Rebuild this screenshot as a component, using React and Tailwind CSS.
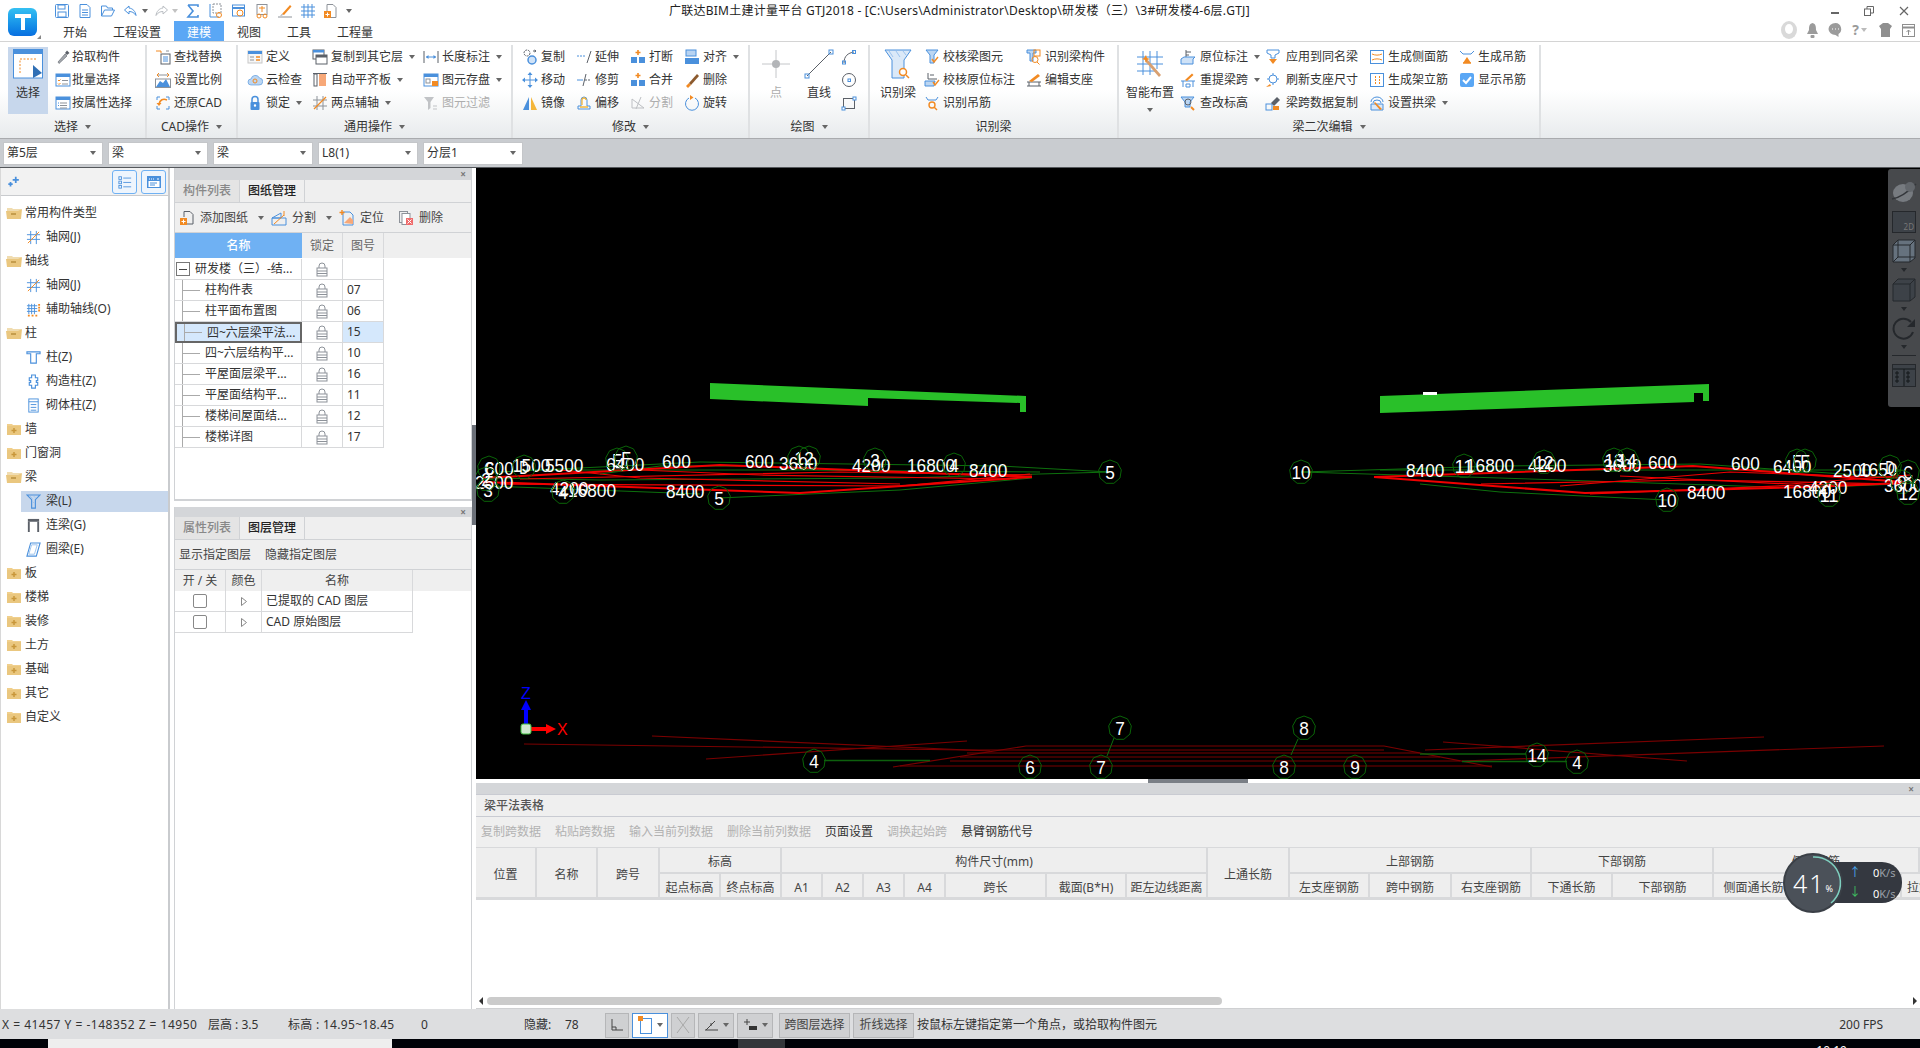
import React from 'react';

const B = '#4a90dc';
const O = '#f28a22';
const G = '#8d9299';
const D = '#5b6068';

const ICONS = {
  save: <><rect x="1.5" y="1.5" width="13" height="13" rx="1" stroke={B} /><rect x="4" y="2" width="7" height="4" stroke={B} /><rect x="4" y="9" width="8" height="5" stroke={B} /></>,
  page: <><path d="M3 1.5h7l3 3v10H3z" stroke={B} /><path d="M5 7h6M5 9.5h6M5 12h6" stroke={B} /></>,
  open: <><path d="M1.5 13V3h5l1 2h5v2" stroke={B} /><path d="M1.5 13l3-6h10l-3 6z" stroke={B} /></>,
  undo: <path d="M6 3L1.5 7 6 11V8.500c3 0 5 1 7 4-.5-4-3-7-7-7.500z" stroke={B} />,
  redo: <path d="M10 3l4.500 4-4.500 4V8.500c-3 0-5 1-7 4 .5-4 3-7 7-7.500z" stroke="#b9bdc2" />,
  sigma: <path d="M3 2h10v2M3 2l5 6-5 6h10v-2" stroke={B} strokeWidth="1.6" />,
  qa1: <><path d="M2 1v13h9" stroke={B} /><rect x="5" y="1" width="8" height="9" stroke={G} strokeDasharray="2 1" /><circle cx="11" cy="12" r="2.500" stroke={O} /></>,
  qa2: <><rect x="1.500" y="2" width="12" height="11" stroke={B} /><path d="M2 5h11" stroke={B} strokeWidth="2" /><circle cx="9" cy="10" r="3" stroke={O} /></>,
  qa3: <><rect x="3" y="1.500" width="10" height="10" stroke={G} /><path d="M5 5h6M8 3v6" stroke={O} /><circle cx="5" cy="13" r="2" stroke={O} /><circle cx="11" cy="13" r="2" stroke={O} /></>,
  qa4: <><path d="M5 11L13 2l1.500 1.500L7 12z" fill={O} /><path d="M1 14h14" stroke={G} /><path d="M3 13l2-2 1 1z" fill={G} /></>,
  qa5: <path d="M4 1v14M8 1v14M12 1v14M1 4h14M1 8h14M1 12h14" stroke={B} />,
  qa6: <><path d="M4 1.500h6l3 3v10H4z" stroke={G} /><rect x="1" y="8" width="7" height="7" fill={O} /><path d="M4.500 9.500v4M2.500 11.500h4" stroke="#fff" /></>,

  pick: <><path d="M3 13l7-8 2 2-8 7.500z" fill="#a5a9ae" stroke={D} strokeWidth=".6" /><path d="M10 4l2-2.500 2.500 2.500L12 6z" fill={D} /></>,
  batch: <><rect x="1" y="2" width="14" height="12" fill="#fff" stroke={B} /><rect x="1" y="2" width="14" height="3" fill={B} /><path d="M3 8l1 1 1.500-1.500M3 11.500l1 1 1.500-1.500" stroke={O} /><path d="M7 8.500h6M7 12h6" stroke={G} /></>,
  attr: <><rect x="1" y="2" width="14" height="12" fill="#fff" stroke={B} /><rect x="1" y="2" width="14" height="3" fill={B} /><path d="M5 8h7M5 10.500h7M5 13h7" stroke={G} /><path d="M3 8h1M3 10.500h1" stroke={B} /></>,
  find: <><rect x="6" y="5" width="9" height="10" stroke={D} /><path d="M8 8h5M8 10h5M8 12h5" stroke={B} /><path d="M1 2h5M6 2v2" stroke={O} /><path d="M11 2h3" stroke={G} /></>,
  scale: <><path d="M1 15l4-6 3 2 3-4 4 8z" fill={B} /><path d="M2 3h12" stroke={G} /><path d="M2 3l2-2M2 3l2 2M14 3l-2-2M14 3l-2 2" stroke={O} /><rect x=".5" y="7" width="15" height="8.500" stroke={G} /></>,
  restore: <><path d="M2 5V2h3M11 2h3v3M14 11v3h-3M5 14H2v-3" stroke={B} /><path d="M12 5C8 3 5 5 4 9" stroke={O} strokeWidth="1.6" /><path d="M1.500 8l2.500 3 2.500-3z" fill={O} /></>,
  define: <><rect x="1" y="2" width="14" height="12" fill="#f6f6f6" stroke="#c7c7c7" /><rect x="1" y="2" width="14" height="3" fill={B} /><path d="M3 8h4M3 11h4" stroke={G} /><path d="M9 8h4M9 11h4" stroke={O} strokeWidth="1.400" /></>,
  cloud: <><path d="M4 13a3 3 0 010-6 4.500 4.500 0 018.500-1A3.500 3.500 0 0112 13z" fill="#bcd6f2" stroke={B} strokeWidth=".6" /><circle cx="8" cy="9" r="2" stroke={O} /></>,
  lock: <><path d="M5 8V4.500a3 3 0 016 0V8" stroke={B} strokeWidth="1.500" /><rect x="3.500" y="7" width="9" height="8" rx="1" fill={B} /><circle cx="8" cy="10.500" r="1.200" fill="#fff" /></>,
  copyFloor: <><rect x="1" y="1" width="11" height="9" fill="#fff" stroke={D} /><rect x="1" y="1" width="11" height="2.500" fill={B} /><rect x="4" y="6" width="11" height="9" fill="#fff" stroke={D} /><rect x="4" y="6" width="11" height="2.500" fill={D} /></>,
  alignPlate: <><rect x="2" y="2" width="3" height="12" stroke={D} /><rect x="7" y="2" width="7" height="12" fill="#f7a878" /><path d="M1 1.500h14" stroke={D} /></>,
  twoPt: <><path d="M5 1v14M11 1v14M1 5h14M1 11h14" stroke={G} /><path d="M2 14L14 2" stroke={O} strokeWidth="1.300" /></>,
  dim: <><path d="M1 2v12M15 2v12" stroke={D} /><path d="M3 8h10" stroke={B} /><path d="M3 8l2.500-2v4zM13 8l-2.500-2v4z" fill={B} /></>,
  store: <><rect x="1" y="2" width="14" height="12" fill="#fff" stroke={B} /><rect x="1" y="2" width="14" height="3" fill={B} /><rect x="3" y="7" width="4" height="4" stroke={G} /><rect x="9" y="9" width="6" height="5" fill={O} /></>,
  filter: <><path d="M1 2h10L7.500 7v6L5 15V7z" fill="#c1c3c6" /><path d="M10 11h4M10 14h4" stroke="#c1c3c6" /></>,
  copy: <><circle cx="5" cy="4" r="3" stroke={D} strokeDasharray="2 1" /><circle cx="10" cy="11" r="4" fill="#cfe2f7" stroke={B} strokeWidth="1.500" /><path d="M11 2h3l-1.500-1M14 2l-1.500 1" stroke={D} /></>,
  move: <><path d="M8 2v12M2 8h12" stroke={B} /><path d="M8 0l2.500 3h-5zM8 16l2.500-3h-5zM0 8l3-2.500v5zM16 8l-3-2.500v5z" fill={B} /></>,
  mirror: <><path d="M7 2v13H1z" fill={B} /><path d="M9 2v13h6z" fill="#f4b63a" /></>,
  extend: <><path d="M1 7h8" stroke={B} strokeDasharray="2 1" /><path d="M15 2L11 14" stroke={D} /></>,
  trim: <><path d="M1 8h6" stroke={B} /><path d="M9 8h6" stroke={D} strokeDasharray="2 1" /><path d="M10 2L7 14" stroke={D} /></>,
  offset: <><path d="M2 14v-3h3V5a3 3 0 016 0v6h3v3z" stroke={B} /><path d="M4 12h8M6 10V5a2 2 0 014 0" stroke="#f4b63a" strokeWidth="1.300" /></>,
  breakI: <><rect x="1" y="8" width="6" height="6" fill={B} /><rect x="9" y="8" width="6" height="6" fill={B} /><path d="M8 1v5M5.500 3.500h5" stroke={O} strokeWidth="1.600" /></>,
  split: <><path d="M2 13h12L2 4z" stroke="#bdbfc3" /><path d="M6 14L11 2" stroke="#bdbfc3" /></>,
  alignB: <><rect x="2" y="1" width="10" height="6" fill="#b7d3f2" stroke={B} /><rect x="1" y="9" width="14" height="6" fill={B} /></>,
  del: <><path d="M2 14l3-3 2 2-3 3z" fill={O} /><path d="M5 11l8-9 2 2-8 9z" fill="#8c5a2e" /></>,
  rotate: <><path d="M5 3a6.500 6.500 0 106 0" stroke={B} /><path d="M6 0v5l3.500-2.500z" fill={O} /></>,
  arc: <><path d="M3 14c0-7 4-10 10-11" stroke={D} /><rect x="1.500" y="12" width="3" height="3" stroke={B} /><rect x="11.500" y="1.500" width="3" height="3" stroke={B} /></>,
  circ: <><circle cx="8" cy="8" r="6.500" stroke={D} /><rect x="7" y="7" width="2.500" height="2.500" stroke={B} /></>,
  rectI: <><rect x="2.500" y="3.500" width="11" height="10" stroke={D} /><rect x="1" y="12" width="3" height="3" fill="#fff" stroke={B} /><rect x="12" y="2" width="3" height="3" fill="#fff" stroke={B} /></>,
  chkBeam: <><path d="M2 1h12l-4 5v8H6V6z" fill="#bcd6f2" stroke={B} /><path d="M8 10l2 3 4-5" stroke={O} strokeWidth="1.400" /></>,
  chkOrig: <><path d="M4 1v6h9" stroke={D} /><path d="M6 3h4" stroke={D} /><path d="M1 9h10l-1 5H1z" fill="#bcd6f2" stroke={B} /><path d="M9 10l2 3 4-5" stroke={O} strokeWidth="1.400" /></>,
  hanger: <><path d="M2 2l2 3h8l2-3" stroke={B} /><circle cx="8" cy="10" r="3" stroke={O} strokeWidth="1.400" /><path d="M10 12l3 3" stroke={O} strokeWidth="1.400" /></>,
  idComp: <><path d="M1 1h9v3H7v8H4V4H1z" fill="#bcd6f2" stroke={B} /><rect x="8" y="1" width="6" height="6" stroke={O} /><circle cx="9" cy="10.500" r="3" stroke={O} /><path d="M11 13l2.500 2.500" stroke={O} /></>,
  editSup: <><path d="M1 10h14M1 14h14M3 10v4M13 10v4" stroke={D} /><path d="M3 9l9-7 2 2-8 6z" fill={O} /></>,
  origin: <><path d="M6 1v7M6 3h5M6 6h3" stroke={D} /><path d="M1 10l3-2h11l-2 2v5H1z" fill="#cfe2f7" stroke={B} /></>,
  respan: <><path d="M1 9h14M3 9v6M13 9v6M6 12h4v3H6z" stroke={B} /><path d="M5 8l7-6.500 1.500 1.500L7 9z" fill={O} /></>,
  height: <><path d="M1 2h13l-4 5v5H5V7z" fill="#bcd6f2" stroke={B} /><circle cx="8" cy="7" r="3" stroke={D} /><path d="M11 12l3 3" stroke={O} strokeWidth="2" /></>,
  same: <><path d="M2 1h12v3l-4 2v3H6V6L2 4z" stroke={B} /><path d="M4 10l4 5 4-5z" fill={O} /></>,
  refresh: <><circle cx="8" cy="7" r="4" stroke={B} /><path d="M8 1v2M8 11v2M2 7h2M12 7h2" stroke={B} /><path d="M1 15l4-3 1 2z" fill={O} /></>,
  spanCopy: <><rect x="1" y="9" width="6" height="6" stroke={B} /><path d="M6 8l6-6 3 3-6 6z" fill={D} /><rect x="8" y="11" width="6" height="4" fill={O} /></>,
  side: <><rect x="1.500" y="1.500" width="13" height="13" stroke={B} /><path d="M3 5c3 1.500 7 1.500 10 0M3 11c3-1.500 7-1.500 10 0" stroke={O} /></>,
  stand: <><rect x="1.500" y="1.500" width="13" height="13" stroke={B} /><path d="M6 5h1M10 5h1M6 8h1M10 8h1M6 11h1M10 11h1" stroke={O} strokeWidth="2" /></>,
  arch: <><path d="M2 7a6 5 0 0112 0" stroke={B} /><path d="M4 8a4 3 0 018 0" stroke={B} /><path d="M2 9h12v6H2z" fill="#dbe9f8" stroke={B} /><path d="M6 7l7 7-2 1-6-7z" fill={O} /></>,
  genHang: <><path d="M1 2l3 3h8l3-3" stroke={B} /><path d="M8 8l-4 6h8z" fill={O} /><path d="M4 14h8" stroke={O} strokeWidth="1.500" /></>,
  checked: <><rect x="1" y="1" width="14" height="14" rx="2" fill="#5aa7f5" /><path d="M4 8l3 3 5-6" stroke="#fff" strokeWidth="2" /></>,

  addPaper: <><path d="M5 1.500h6l3 3V14H8" stroke={D} /><rect x="1" y="8" width="7" height="7" fill={O} /><path d="M4.500 9.500v4M2.500 11.500h4" stroke="#fff" /><path d="M5 1.500V7" stroke={D} /></>,
  cut: <><path d="M1 8l9-5v5zM1 8v7h14V8z" stroke={B} /><path d="M3 14l10-9" stroke={O} /><path d="M13 1v5" stroke={O} /></>,
  locate: <><path d="M4 2h7l3 3v10H4z" stroke={B} /><path d="M5 13L11 7l3 3v4z" fill="#f7a878" /><path d="M3 0v5M.5 2.500h5" stroke={O} strokeWidth="1.400" /></>,
  delPaper: <><rect x="1.500" y="1.500" width="8" height="11" stroke={G} /><rect x="4" y="3.500" width="8" height="11" fill="#fff" stroke={G} /><rect x="8" y="8" width="7" height="7" fill="#ef6b6b" /><path d="M9.500 9.500l4 4M13.500 9.500l-4 4" stroke="#fff" /></>,

  grid: <><path d="M5 1v14M11 1v14M1 5h14M1 10h14" stroke={B} /><path d="M2 14L14 2" stroke={O} /></>,
  gridO: <><path d="M3 2v11M6 2v11M9 2v11M1 4h11M1 7h11M1 10h11" stroke={B} /><path d="M13 3h2M13 6h2M13 9h2M2 14.500h2M6 14.500h2M10 14.500h2" stroke={O} strokeWidth="2" /></>,
  col: <path d="M1 2h14v2h-4v10H5V4H1z" stroke={B} strokeWidth="1.200" />,
  gz: <path d="M6 1h4v3h2.500v3H11v2h1.500v3H10v3H6v-3H3.500V9H5V7H3.500V4H6z" stroke={B} strokeWidth="1.200" />,
  brick: <><rect x="3" y="1" width="10" height="14" stroke={B} /><path d="M3 4h10M5 7h6M5 10h6M5 13h6" stroke={B} /></>,
  beam: <><path d="M1 1h14l-5 5v9H6V6z" stroke={B} strokeWidth="1.200" /><path d="M4 2l3 3M8 2l2 2M7 8l2 2" stroke="#9cc3ee" /></>,
  link: <><rect x="2" y="1" width="12" height="3" fill={D} /><path d="M3 4v11M13 4v11" stroke={D} strokeWidth="2" /></>,
  ring: <><path d="M5 1h10l-4 14H1z" stroke={B} strokeWidth="1.200" /><path d="M6 3h6l-3 10H3z" stroke="#9cc3ee" /></>,

  list: <><rect x="1" y="2" width="3" height="3" stroke={B} /><rect x="1" y="7" width="3" height="3" stroke={B} /><rect x="1" y="12" width="3" height="3" stroke={B} /><path d="M6 3.500h9M6 8.500h9M6 13.500h9" stroke={B} /></>,
  panel: <><rect x="1" y="2" width="14" height="12" fill={B} /><path d="M3 5h1M5 5h1M7 5h1M11 5h2" stroke="#fff" /><rect x="2.500" y="7" width="11" height="6" fill="#fff" /><path d="M4 9h7M4 11h5" stroke={B} /></>,
  spark: <><path d="M10 2v7M6.500 5.500h7" stroke={B} strokeWidth="2" /><path d="M4 8v5M1.500 10.500h5" stroke={B} strokeWidth="2" /></>,
  grayLock: <><path d="M5 7V5a3 3 0 016 0v2" stroke={G} /><rect x="3" y="7" width="10" height="8" fill="#fff" stroke={G} /><path d="M3 10h10M3 12.500h10" stroke={G} /></>,
};

function Ico({ n, s = 16 }) {
  return (
    <svg width={s} height={s} viewBox="0 0 16 16" fill="none" className="shrink-0">
      {ICONS[n]}
    </svg>
  );
}

const Caret = ({ c = 'border-t-[#666]' }) => (
  <span className={`inline-block w-0 h-0 border-x-[3.500px] border-x-transparent border-t-[4px] ${c}`} />
);

function RibbonItem({ icon, label, slot = 19, arrow, off }) {
  return (
    <div className="flex items-center h-[23px] whitespace-nowrap">
      <div className={slot === 17 ? 'w-[17px]' : slot === 20 ? 'w-[20px]' : slot === 21 ? 'w-[21px]' : 'w-[19px]'}>
        <Ico n={icon} />
      </div>
      <span className={off ? 'text-[#adadad]' : 'text-[#333]'}>{label}</span>
      {arrow && <span className="ml-[6px] flex items-center"><Caret /></span>}
    </div>
  );
}

function Group({ w, label, arrow, children }) {
  return (
    <div className={`${w} shrink-0 h-[93px] border-r-2 border-[#dfe1e3] flex flex-col`}>
      <div className="h-[72px] flex">{children}</div>
      <div className="flex-1 flex items-center justify-center gap-[7px] pb-[1px] text-[#333]">
        <span>{label}</span>
        {arrow && <Caret />}
      </div>
    </div>
  );
}

function Big({ w, label, off, arrow, active, children }) {
  return (
    <div className={`${w} h-[67px] mt-[2px] flex flex-col items-center whitespace-nowrap ${active ? 'bg-[#c7d7ec]' : ''}`}>
      <div className="h-[34px] mt-[1px] pb-[3px] flex items-center justify-center">{children}</div>
      <span className={`mt-[3px] ${off ? 'text-[#adadad]' : 'text-[#333]'}`}>{label}</span>
      {arrow && <span className="mt-[7px] flex"><Caret /></span>}
    </div>
  );
}

const Combo = ({ text }) => (
  <div className="w-[100px] h-[23px] bg-white border border-[#c4c6c9] flex items-center justify-between pl-[3px] pr-[6px] text-[#333]">
    <span>{text}</span>
    <Caret />
  </div>
);

const tabs = [
  { t: '开始', c: 'w-[24px] mr-[26px]' },
  { t: '工程设置', c: 'w-[48px] mr-[13px]' },
  { t: '建模', c: 'w-[50px] mr-[13px]', on: true },
  { t: '视图', c: 'w-[24px] mr-[26px]' },
  { t: '工具', c: 'w-[24px] mr-[26px]' },
  { t: '工程量', c: 'w-[36px]' },
];

const tree = [
  { g: '常用构件类型', open: true }, { c: '轴网(J)', i: 'grid' },
  { g: '轴线', open: true }, { c: '轴网(J)', i: 'grid' }, { c: '辅助轴线(O)', i: 'gridO' },
  { g: '柱', open: true }, { c: '柱(Z)', i: 'col' }, { c: '构造柱(Z)', i: 'gz' }, { c: '砌体柱(Z)', i: 'brick' },
  { g: '墙' }, { g: '门窗洞' },
  { g: '梁', open: true }, { c: '梁(L)', i: 'beam', on: true }, { c: '连梁(G)', i: 'link' }, { c: '圈梁(E)', i: 'ring' },
  { g: '板' }, { g: '楼梯' }, { g: '装修' }, { g: '土方' }, { g: '基础' }, { g: '其它' }, { g: '自定义' },
];

function Folder({ open }) {
  return (
    <svg width="16" height="14" viewBox="0 0 16 14" className="shrink-0">
      <path d="M1 2h5l1 1h8v10H1z" fill={open ? '#f0dcb0' : '#f0cf8c'} />
      <path d={open ? 'M0 5h12l4-2-1 10H1z' : 'M1 4h14v9H1z'} fill="#eac77f" />
      {open ? <path d="M5 8h5" stroke="#b98f3c" strokeWidth="1.500" /> : <path d="M5.500 8.500h5M8 6v5" stroke="#c8963a" strokeWidth="1.500" />}
    </svg>
  );
}

const papers = [
  ['柱构件表', '07'], ['柱平面布置图', '06'], ['四~六层梁平法...', '15', true], ['四~六层结构平...', '10'],
  ['平屋面层梁平...', '16'], ['平屋面结构平...', '11'], ['楼梯间屋面结...', '12'], ['楼梯详图', '17'],
];

const PanelClose = ({ h = 'h-[12px]' }) => (
  <div className={`${h} bg-[#d4d6d9] flex items-center justify-end pr-[5px] text-[10px] leading-none text-[#777] font-bold`}>×</div>
);

const PanelTabs = ({ a, b }) => (
  <div className="h-[23px] flex bg-[#efefef] border-b border-[#d0d2d5]">
    <div className="w-[65px] bg-[#e4e4e4] border-r border-[#d0d2d5] flex items-center justify-center text-[#888] font-medium">{a}</div>
    <div className="w-[65px] border-r border-[#d0d2d5] flex items-center justify-center text-[#222] font-medium">{b}</div>
  </div>
);

const ToolBtn = ({ icon, label, arrow, w }) => (
  <div className={`${w} flex items-center gap-[5px] text-[#444]`}>
    <Ico n={icon} />
    <span>{label}</span>
    {arrow && <span className="ml-[5px] flex"><Caret /></span>}
  </div>
);

function CadText({ x, y, t, anchor }) {
  return (
    <text
      x={x}
      y={y}
      textAnchor={anchor}
      fontSize="19"
      fill="#fff"
      textLength={t.length * 9.6}
      lengthAdjust="spacingAndGlyphs"
      fontFamily="Liberation Sans, sans-serif"
    >
      {t}
    </text>
  );
}

function Octagon({ x, y, t }) {
  const pts = [];
  for (let i = 0; i < 9; i++) {
    const a = (i / 9) * Math.PI * 2 - Math.PI / 2;
    pts.push(`${(x + 11.500 * Math.cos(a)).toFixed(1)},${(y + 12 * Math.sin(a)).toFixed(1)}`);
  }
  return (
    <g>
      <polygon points={pts.join(' ')} fill="none" stroke="#0a6408" strokeWidth="1" />
      <CadText x={x} y={y + 7} t={t} anchor="middle" />
    </g>
  );
}

const nodes = [
  [489, 468, 'C'], [488, 490, '3'], [486, 479, '2'], [524, 467, 'D'], [563, 492, '4'], [617, 460, 'E'], [626, 458, 'F'],
  [799, 458, '1'], [809, 458, '2'], [875, 460, '3'], [954, 465, '4'], [1110, 472, '5'], [719, 498, '5'],
  [1301, 472, '10'], [1464, 466, '11'], [1544, 462, '12'], [1614, 460, '13'], [1627, 460, '14'], [1797, 461, 'E'],
  [1805, 461, 'F'], [1890, 467, 'D'], [1908, 472, 'C'], [1902, 482, '9'], [1667, 500, '10'], [1829, 495, '11'], [1908, 493, '12'],
  [814, 761, '4'], [1030, 767, '6'], [1101, 767, '7'], [1120, 728, '7'], [1304, 728, '8'], [1284, 767, '8'],
  [1355, 767, '9'], [1537, 755, '14'], [1577, 762, '4'],
];

const dims = [
  [485, 475, '600'], [512, 472, '1500'], [545, 472, '5500'], [475, 489, '2500'], [550, 495, '4200'], [568, 497, '16800'],
  [606, 471, '6400'], [662, 468, '600'], [745, 468, '600'], [779, 470, '3600'], [852, 472, '4200'], [907, 472, '16800'],
  [969, 477, '8400'], [666, 498, '8400'],
  [1406, 477, '8400'], [1466, 472, '16800'], [1528, 472, '4200'], [1603, 472, '3600'], [1648, 469, '600'], [1731, 470, '600'],
  [1773, 473, '6400'], [1833, 477, '2500'], [1859, 476, '1650'], [1687, 499, '8400'], [1783, 498, '16800'], [1809, 494, '4200'], [1884, 492, '3600'],
];

const redLines = [
  '483,478 720,465 1032,477', '483,482 800,493 1032,477', '520,479 840,472 1032,475', '500,484 900,486 1030,474',
  '560,470 640,478 900,484', '640,470 760,475 1010,479',
  '1374,477 1693,466 1904,482', '1374,477 1585,493 1809,487 1904,483', '1481,484 1700,480 1900,484', '1590,494 1800,485 1900,483',
  '1620,476 1790,484 1910,475', '1560,486 1730,472 1900,478',
];

const greenLines = [
  '1110,472 1000,466 700,462 500,472', '1110,472 900,478 600,480 490,478', '719,498 900,490 1032,478', '1040,472 800,470 520,470',
  '1301,472 1500,466 1700,464 1900,478', '1301,472 1500,478 1800,488 1900,484', '1667,500 1500,492 1420,484', '1380,470 1800,470 1900,470',
  '488,486 700,494', '600,474 660,466 760,466',
];

const darkLines = [
  '524,744 967,750', '652,736 990,751', '706,759 967,741', '893,767 1026,746 1384,746 1492,767',
  '967,750 1384,750', '967,753 1420,753', '960,757 1440,757', '950,761 1460,761', '900,766 1492,766',
  '1425,750 1764,737', '1443,742 1687,761', '1462,761 1884,746',
];

function Canvas() {
  return (
    <div className="relative h-[611px] bg-black overflow-hidden">
      <svg viewBox="476 168 1444 611" className="block w-full h-full">
        <polygon points="710,383 1026,396 1026,412 1020,412 1020,403 868,398 868,406 710,399" fill="#29c029" />
        <polygon points="1380,396 1709,384 1709,401 1703,401 1703,393 1694,393 1694,402 1380,413" fill="#29c029" />
        <rect x="1423" y="392" width="14" height="3" fill="#fff" />
        {greenLines.map((p) => <polyline key={p} points={p} fill="none" stroke="#0d700d" strokeWidth="1" />)}
        {redLines.map((p, i) => <polyline key={p} points={p} fill="none" stroke="#f00000" strokeWidth={i % 6 < 2 ? 2 : 1.200} />)}
        {darkLines.map((p) => <polyline key={p} points={p} fill="none" stroke="#7a0000" strokeWidth="1.200" />)}
        <path d="M824 760.500H930M1420 754H1526M1462 761.500H1567" stroke="#0d600d" strokeWidth="1.500" />
        <path d="M1114 738L1107 756M1298 739L1291 755" stroke="#0d700d" />
        {dims.map(([x, y, t]) => <CadText key={`${x}-${t}`} x={x} y={y} t={t} />)}
        {nodes.map(([x, y, t]) => <Octagon key={`${x}-${y}`} x={x} y={y} t={t} />)}
        <path d="M526 725V708" stroke="#0000ff" strokeWidth="4" />
        <path d="M526 700l5 10h-10z" fill="#0000ff" />
        <path d="M530 729H548" stroke="#ff0000" strokeWidth="4" />
        <path d="M556 729l-10 5v-10z" fill="#ff0000" />
        <rect x="521" y="724" width="10" height="10" rx="2" fill="#cfe8cf" stroke="#3fbf3f" />
        <text x="526" y="699" textAnchor="middle" fontSize="16" fill="#0000ff" fontFamily="Liberation Sans, sans-serif">Z</text>
        <text x="557" y="735" fontSize="16" fill="#ff0000" fontFamily="Liberation Sans, sans-serif">X</text>
      </svg>
      <ViewTools />
    </div>
  );
}

function ViewTools() {
  const stroke = '#25282c';
  const fill = '#3d4248';
  const Down = () => <span className="flex mt-[5px] mb-[6px]"><Caret c="border-t-[#25282c]" /></span>;
  return (
    <div className="absolute right-0 top-[1px] w-[32px] h-[238px] bg-[#47494c] rounded-l-[3px] flex flex-col items-center pt-[12px]">
      <svg width="26" height="22" viewBox="0 0 26 22">
        <ellipse cx="12" cy="12" rx="10" ry="9" fill="#777b80" />
        <path d="M1 18C8 17 18 10 25 3" stroke="#33363a" strokeWidth="1.500" fill="none" />
        <circle cx="19" cy="6" r="5" fill="#63676c" />
      </svg>
      <div className="w-[24px] h-[22px] mt-[8px] bg-[#3d4248] border border-[#25282c] flex items-end justify-end pr-[1px] text-[8px] leading-[10px] text-[#777]">2D</div>
      <svg width="24" height="24" viewBox="0 0 24 24" className="mt-[6px]">
        <path d="M1 6l5-5h17v18l-5 4H1z" fill="#66727e" stroke={stroke} />
        <path d="M1 6h17v17M18 6l5-5M6 1v17h17M6 18l-5 5" fill="none" stroke={stroke} />
      </svg>
      <Down />
      <svg width="24" height="24" viewBox="0 0 24 24">
        <path d="M1 6l5-5h17v18l-5 4H1z" fill={fill} stroke={stroke} />
        <path d="M1 6h17v17M18 6l5-5" fill="none" stroke={stroke} />
      </svg>
      <Down />
      <svg width="24" height="23" viewBox="0 0 24 23">
        <path d="M19 5A10 10 0 1021 15" fill="none" stroke={stroke} strokeWidth="2" />
        <path d="M23 2v8h-8z" fill={stroke} />
      </svg>
      <Down />
      <div className="w-[24px] h-px bg-[#25282c]" />
      <svg width="24" height="23" viewBox="0 0 24 23" className="mt-[8px]">
        <rect x=".5" y=".5" width="23" height="22" fill={fill} stroke={stroke} />
        <path d="M1 5h22M12 5v17M4 8h2v2H4zM4 12h2v2H4zM4 16h2v2H4zM15 8h2v2h-2zM15 12h2v2h-2zM15 16h2v2h-2z" fill="none" stroke="#15181b" />
      </svg>
    </div>
  );
}

const beamColumns = 'grid grid-cols-[61px_61px_62px_61px_61px_41px_41px_41px_41px_101px_80px_81px_82px_80px_82px_80px_81px_101px_81px_107px_18px] grid-rows-[26px_25px]';
const th = 'border-r-2 border-b-2 border-[#d8d9db] flex items-center justify-center pt-[4px] whitespace-nowrap overflow-hidden';

function BeamTable() {
  const subs = ['起点标高', '终点标高', 'A1', 'A2', 'A3', 'A4', '跨长', '截面(B*H)', '距左边线距离', '左支座钢筋', '跨中钢筋', '右支座钢筋', '下通长筋', '下部钢筋', '侧面通长筋', '侧面原位标注筋'];
  return (
    <div className={`${beamColumns} bg-[#eee] text-[#444] border-y border-[#d8d9db]`}>
      <div className={`${th} row-span-2`}>位置</div>
      <div className={`${th} row-span-2`}>名称</div>
      <div className={`${th} row-span-2`}>跨号</div>
      <div className={`${th} col-span-2`}>标高</div>
      <div className={`${th} col-span-7`}>构件尺寸(mm)</div>
      <div className={`${th} row-span-2`}>上通长筋</div>
      <div className={`${th} col-span-3`}>上部钢筋</div>
      <div className={`${th} col-span-2`}>下部钢筋</div>
      <div className={`${th} col-span-3`}>侧面钢筋</div>
      {subs.map((t) => <div key={t} className={th}>{t}</div>)}
      <div className="border-b-2 border-[#d8d9db] flex items-center pl-[5px] pt-[4px] whitespace-nowrap overflow-hidden">拉筋</div>
    </div>
  );
}

function NetWidget() {
  return (
    <div className="absolute left-[1783px] top-[853px] w-[120px] h-[62px] text-white">
      <div className="absolute left-[28px] top-[9px] w-[91px] h-[41px] rounded-r-[20px] bg-[#343840]">
        <div className="absolute left-[38px] top-[3px] text-[12px] leading-[16px] text-[#4aa8f0]">↑</div>
        <div className="absolute left-[62px] top-[3px] text-[11px] leading-[16px] whitespace-nowrap">0<span className="text-[#9aa0a8]">K/s</span></div>
        <div className="absolute left-[38px] top-[22px] text-[12px] leading-[16px] text-[#3fc060]">↓</div>
        <div className="absolute left-[62px] top-[24px] text-[11px] leading-[16px] whitespace-nowrap">0<span className="text-[#9aa0a8]">K/s</span></div>
      </div>
      <div className="absolute left-0 top-0 w-[60px] h-[60px] rounded-full bg-[#4b5159] border-[2px] border-[#3a3f46] flex items-center justify-center">
        <span className="text-[25px] leading-none font-light tracking-[2px]">41</span>
        <span className="text-[9px] leading-none mt-[10px]">%</span>
      </div>
      <svg width="60" height="60" viewBox="0 0 60 60" className="absolute left-0 top-0">
        <path d="M30 4A26 26 0 0148 50" fill="none" stroke="#7fd0c0" strokeWidth="1.500" />
      </svg>
    </div>
  );
}

const StatusBtn = ({ w, children, on }) => (
  <div className={`${w} h-[25px] flex items-center justify-center gap-[4px] border ${on ? 'bg-white border-[#4a90dc]' : 'bg-[#cfd0d2] border-[#b5b6b8]'}`}>
    {children}
  </div>
);

export default function App() {
  return (
    <div className="relative w-[1920px] h-[1048px] overflow-hidden flex flex-col bg-white text-[12px] leading-[16px] font-['Noto_Sans','Noto_Sans_CJK_SC',sans-serif]">
      {/* title + tabs */}
      <div className="h-[42px] flex bg-white border-b border-[#d4d4d4]">
        <div className="w-[46px] relative flex items-center justify-center">
          <div className="w-[29px] h-[28px] mt-[2px] mr-[1px] rounded-[6px] bg-gradient-to-b from-[#35c0f2] to-[#0a6fe0] flex items-center justify-center">
            <svg width="20" height="20" viewBox="0 0 20 20">
              <path d="M2 2h16v4h-6v12H8V6H2z" fill="#fff" />
            </svg>
          </div>
          <span className="absolute right-[5px] bottom-[2px] w-0 h-0 border-l-[4px] border-l-transparent border-b-[4px] border-b-[#888]" />
        </div>
        <div className="flex-1 flex flex-col min-w-0">
          <div className="h-[23px] flex items-center">
            <div className="flex items-center w-[623px] pl-[8px]">
              <div className="flex items-center gap-[7px]">
                <Ico n="save" s={16} /><Ico n="page" s={16} /><Ico n="open" s={16} />
              </div>
              <div className="flex items-center gap-[3px] ml-[7px]"><Ico n="undo" s={16} /><Caret /></div>
              <div className="flex items-center gap-[3px] ml-[5px]"><Ico n="redo" s={16} /><Caret c="border-t-[#c2c2c2]" /></div>
              <div className="flex items-center gap-[7px] ml-[7px]">
                <Ico n="sigma" /><Ico n="qa1" /><Ico n="qa2" /><Ico n="qa3" /><Ico n="qa4" /><Ico n="qa5" /><Ico n="qa6" />
              </div>
              <span className="ml-[7px] flex"><Caret /></span>
            </div>
            <span className="text-[#222] whitespace-nowrap tracking-[0.25px]">广联达BIM土建计量平台 GTJ2018 - [C:\Users\Administrator\Desktop\研发楼（三）\3#研发楼4-6层.GTJ]</span>
            <div className="ml-auto flex items-center gap-[25px] pr-[11px] text-[#555]">
              <span className="w-[8px] h-[2px] bg-[#666] mt-[4px]" />
              <svg width="10" height="10" viewBox="0 0 10 10" fill="none" stroke="#666"><rect x=".5" y="3" width="6" height="6.500" /><path d="M3 3V.5h6.500V7H7" /></svg>
              <svg width="10" height="10" viewBox="0 0 10 10" stroke="#666" strokeWidth="1.200"><path d="M1 1l8 8M9 1l-8 8" /></svg>
            </div>
          </div>
          <div className="flex-1 flex items-stretch">
            <div className="w-[17px]" />
            {tabs.map((x) => (
              <div key={x.t} className={`${x.c} flex items-center justify-center pt-[3px] whitespace-nowrap ${x.on ? 'bg-[#5aa7f5] text-white' : 'text-[#333]'}`}>
                {x.t}
              </div>
            ))}
            <div className="ml-auto flex items-center gap-[9px] pr-[5px] pb-[2px]">
              <svg width="16" height="18" viewBox="0 0 16 18"><ellipse cx="8" cy="9" rx="8" ry="9" fill="#d9d9d9" /><ellipse cx="8" cy="8" rx="4" ry="5" fill="#fff" /></svg>
              <svg width="13" height="15" viewBox="0 0 13 15"><path d="M6.500 0C3 1 3 4 3 7L1 11h11L10 7c0-3 0-6-3.500-7z" fill="#9b9b9b" /><rect x="4.500" y="12" width="4" height="3" rx="1" fill="#9b9b9b" /></svg>
              <svg width="15" height="14" viewBox="0 0 15 14"><path d="M7.500 0a7 6 0 100 12l3 2v-3a6 6 0 00-3-11z" fill="#9b9b9b" /><path d="M4 6h1M7 6h1M10 6h1" stroke="#fff" /></svg>
              <span className="flex items-center gap-[2px] text-[#9b9b9b] text-[14px] font-bold leading-none">?<Caret c="border-t-[#bbb]" /></span>
              <svg width="13" height="14" viewBox="0 0 13 14" className="ml-[3px]"><path d="M4 0h5l4 3-2 3V14H2V6L0 3z" fill="#8f8f8f" /></svg>
              <svg width="13" height="13" viewBox="0 0 13 13" fill="none" stroke="#8f8f8f" className="ml-[1px]"><rect x=".5" y=".5" width="12" height="12" /><path d="M1 3.500h11" strokeWidth="2" /><path d="M6.500 11V6M4.500 8l2-2 2 2" /></svg>
            </div>
          </div>
        </div>
      </div>

      {/* ribbon */}
      <div className="h-[97px] flex pt-[3px] bg-gradient-to-b from-white from-50% to-[#e8ebed] border-b border-[#a9abae]">
        <Group w="w-[147px]" label="选择" arrow>
          <div className="ml-[8px] mr-[7px]">
            <Big w="w-[40px]" label="选择" active>
              <svg width="30" height="30" viewBox="0 0 30 30">
                <rect x=".5" y="1" width="29" height="28" fill="#fff" stroke={B} />
                <rect x="0" y="0" width="30" height="5" fill={B} />
                <path d="M7 24V10h16" stroke={O} fill="none" strokeDasharray="2 1.500" />
                <path d="M20 16l9 8-9 5z" fill="#2f6fb5" />
              </svg>
            </Big>
          </div>
          <div>
            <RibbonItem icon="pick" label="拾取构件" slot={17} />
            <RibbonItem icon="batch" label="批量选择" slot={17} />
            <RibbonItem icon="attr" label="按属性选择" slot={17} />
          </div>
        </Group>
        <Group w="w-[91px]" label="CAD操作" arrow>
          <div className="pl-[8px]">
            <RibbonItem icon="find" label="查找替换" />
            <RibbonItem icon="scale" label="设置比例" />
            <RibbonItem icon="restore" label="还原CAD" />
          </div>
        </Group>
        <Group w="w-[275px]" label="通用操作" arrow>
          <div className="pl-[9px] w-[74px]">
            <RibbonItem icon="define" label="定义" />
            <RibbonItem icon="cloud" label="云检查" />
            <RibbonItem icon="lock" label="锁定" arrow />
          </div>
          <div className="w-[111px]">
            <RibbonItem icon="copyFloor" label="复制到其它层" arrow />
            <RibbonItem icon="alignPlate" label="自动平齐板" arrow />
            <RibbonItem icon="twoPt" label="两点辅轴" arrow />
          </div>
          <div>
            <RibbonItem icon="dim" label="长度标注" arrow />
            <RibbonItem icon="store" label="图元存盘" arrow />
            <RibbonItem icon="filter" label="图元过滤" off />
          </div>
        </Group>
        <Group w="w-[237px]" label="修改" arrow>
          <div className="pl-[9px] w-[63px]">
            <RibbonItem icon="copy" label="复制" />
            <RibbonItem icon="move" label="移动" />
            <RibbonItem icon="mirror" label="镜像" />
          </div>
          <div className="w-[54px]">
            <RibbonItem icon="extend" label="延伸" />
            <RibbonItem icon="trim" label="修剪" />
            <RibbonItem icon="offset" label="偏移" />
          </div>
          <div className="w-[54px]">
            <RibbonItem icon="breakI" label="打断" />
            <RibbonItem icon="breakI" label="合并" />
            <RibbonItem icon="split" label="分割" off />
          </div>
          <div>
            <RibbonItem icon="alignB" label="对齐" arrow />
            <RibbonItem icon="del" label="删除" />
            <RibbonItem icon="rotate" label="旋转" />
          </div>
        </Group>
        <Group w="w-[120px]" label="绘图" arrow>
          <div className="ml-[6px]">
            <Big w="w-[40px]" label="点" off>
              <svg width="30" height="30" viewBox="0 0 30 30" stroke="#c4c6c9"><path d="M15 1v28M1 15h28" /><circle cx="15" cy="15" r="4" fill="#b3b5b8" stroke="none" /></svg>
            </Big>
          </div>
          <div className="ml-[3px]">
            <Big w="w-[40px]" label="直线">
              <svg width="30" height="30" viewBox="0 0 30 30" fill="none"><path d="M3 27L27 3" stroke={D} /><rect x="1" y="25" width="4" height="4" stroke={B} /><rect x="25" y="1" width="4" height="4" stroke={B} /></svg>
            </Big>
          </div>
          <div className="ml-[2px] flex flex-col items-center">
            <div className="h-[23px] flex items-center"><Ico n="arc" /></div>
            <div className="h-[23px] flex items-center"><Ico n="circ" /></div>
            <div className="h-[23px] flex items-center"><Ico n="rectI" /></div>
          </div>
        </Group>
        <Group w="w-[249px]" label="识别梁">
          <div className="ml-[6px] mr-[4px]">
            <Big w="w-[44px]" label="识别梁">
              <svg width="28" height="30" viewBox="0 0 28 30" fill="none"><path d="M1 1h26l-7 10v18H8V11z" fill="#dbe9f8" stroke={B} /><path d="M5 2l4 6M12 2l4 6M19 2l3 4" stroke="#9cc3ee" /><circle cx="19" cy="23" r="3.500" fill="#fff" stroke={O} strokeWidth="1.500" /><path d="M22 26l3 3" stroke={O} strokeWidth="1.500" /></svg>
            </Big>
          </div>
          <div className="w-[102px]">
            <RibbonItem icon="chkBeam" label="校核梁图元" />
            <RibbonItem icon="chkOrig" label="校核原位标注" />
            <RibbonItem icon="hanger" label="识别吊筋" />
          </div>
          <div>
            <RibbonItem icon="idComp" label="识别梁构件" />
            <RibbonItem icon="editSup" label="编辑支座" />
          </div>
        </Group>
        <Group w="w-[422px]" label="梁二次编辑" arrow>
          <div className="ml-[7px] mr-[6px]">
            <Big w="w-[48px]" label="智能布置" arrow>
              <svg width="30" height="30" viewBox="0 0 30 30" fill="none"><path d="M2 8h26M2 15h26M2 22h20M8 2v24M15 2v24M22 2v18" stroke={B} /><path d="M12 10l14 16-2 2L10 12z" fill="#d9a070" /><path d="M9 9l2-3 1 3 3 1-3 1-1 3-1-3-3-1z" fill={O} /></svg>
            </Big>
          </div>
          <div className="w-[85px]">
            <RibbonItem icon="origin" label="原位标注" slot={20} arrow />
            <RibbonItem icon="respan" label="重提梁跨" slot={20} arrow />
            <RibbonItem icon="height" label="查改标高" slot={20} />
          </div>
          <div className="w-[104px]">
            <RibbonItem icon="same" label="应用到同名梁" slot={21} />
            <RibbonItem icon="refresh" label="刷新支座尺寸" slot={21} />
            <RibbonItem icon="spanCopy" label="梁跨数据复制" slot={21} />
          </div>
          <div className="w-[90px]">
            <RibbonItem icon="side" label="生成侧面筋" />
            <RibbonItem icon="stand" label="生成架立筋" />
            <RibbonItem icon="arch" label="设置拱梁" arrow />
          </div>
          <div>
            <RibbonItem icon="genHang" label="生成吊筋" />
            <RibbonItem icon="checked" label="显示吊筋" />
          </div>
        </Group>
      </div>

      {/* combo bar */}
      <div className="h-[29px] bg-[#c9ccd0] flex items-center gap-[5px] pl-[3px] border-b border-[#55585c]">
        <Combo text="第5层" />
        <Combo text="梁" />
        <Combo text="梁" />
        <Combo text="L8(1)" />
        <Combo text="分层1" />
      </div>

      {/* main */}
      <div className="h-[841px] flex">
        <div className="w-[170px] shrink-0 bg-white border-r-2 border-[#c9cbce] border-l border-l-[#d8d8d8] flex flex-col">
          <div className="h-[28px] bg-[#f2f2f2] border-b border-[#c9cbce] flex items-center pl-[6px] pr-[2px]">
            <Ico n="spark" s={14} />
            <div className="ml-auto flex gap-[4px]">
              <div className="w-[25px] h-[24px] rounded-[3px] border border-[#6fb1f3] bg-[#eef5fd] flex items-center justify-center"><Ico n="list" s={14} /></div>
              <div className="w-[25px] h-[24px] rounded-[3px] border border-[#6fb1f3] bg-[#eef5fd] flex items-center justify-center"><Ico n="panel" s={16} /></div>
            </div>
          </div>
          <div className="pt-[5px]">
            {tree.map((r, i) => r.g ? (
              <div key={i} className="h-[24px] flex items-center pl-[5px] gap-[3px] text-[#333]">
                <Folder open={r.open} />
                <span>{r.g}</span>
              </div>
            ) : r.on ? (
              <div key={i} className="h-[21px] my-[1.500px] ml-[20px] flex items-center pl-[5px] gap-[5px] text-[#333] bg-[#c7d7ec]">
                <Ico n={r.i} s={15} />
                <span>{r.c}</span>
              </div>
            ) : (
              <div key={i} className="h-[24px] ml-[20px] flex items-center pl-[5px] gap-[5px] text-[#333]">
                <Ico n={r.i} s={15} />
                <span>{r.c}</span>
              </div>
            ))}
          </div>
        </div>

        <div className="w-[306px] shrink-0 flex bg-white">
          <div className="w-[4px]" />
          <div className="w-[298px] flex flex-col">
            <div className="h-[333px] flex flex-col border-x border-b-2 border-[#d0d2d5]">
              <PanelClose />
              <PanelTabs a="构件列表" b="图纸管理" />
              <div className="h-[30px] bg-[#efefef] border-b border-[#d0d2d5] flex items-center pl-[4px]">
                <ToolBtn icon="addPaper" label="添加图纸" arrow w="w-[92px]" />
                <ToolBtn icon="cut" label="分割" arrow w="w-[68px]" />
                <ToolBtn icon="locate" label="定位" w="w-[59px]" />
                <ToolBtn icon="delPaper" label="删除" />
              </div>
              <div className="h-[25px] bg-[#efefef] flex text-[#666]">
                <div className="w-[127px] bg-[#6fb1f3] text-white font-medium flex items-center justify-center">名称</div>
                <div className="w-[41px] border-r border-[#d8d9db] flex items-center justify-center">锁定</div>
                <div className="w-[41px] border-r border-[#d8d9db] flex items-center justify-center">图号</div>
              </div>
              <div className="h-px" />
              <div className="w-[209px] grid grid-cols-[127px_41px_41px] auto-rows-[21px] text-[#333]">
                <div className="border-r border-b border-[#d8d9db] flex items-center pl-[1px] gap-[5px] whitespace-nowrap">
                  <span className="w-[14px] h-[14px] border border-[#777] flex items-center justify-center"><span className="w-[8px] h-px bg-[#444]" /></span>
                  <span>研发楼（三）-结...</span>
                </div>
                <div className="border-r border-b border-[#d8d9db] flex items-center justify-center"><Ico n="grayLock" /></div>
                <div className="border-r border-b border-[#d8d9db]" />
                {papers.map(([t, no, on]) => (
                  <React.Fragment key={t}>
                    <div className={`flex items-center whitespace-nowrap ${on ? 'bg-[#d5e8fc] border-2 border-[#666]' : 'border-r border-b border-[#d8d9db]'}`}>
                      <span className="w-[8px] h-full border-r border-[#aaa] shrink-0" />
                      <span className="w-[17px] h-px bg-[#aaa] shrink-0 mr-[5px]" />
                      <span>{t}</span>
                    </div>
                    <div className="border-r border-b border-[#d8d9db] flex items-center justify-center"><Ico n="grayLock" /></div>
                    <div className={`border-r border-b border-[#d8d9db] flex items-center pl-[4px] ${on ? 'bg-[#d5e8fc]' : ''}`}>{no}</div>
                  </React.Fragment>
                ))}
              </div>
            </div>
            <div className="h-[6px]" />
            <div className="flex-1 flex flex-col border-x border-[#d0d2d5]">
              <PanelClose h="h-[10px]" />
              <PanelTabs a="属性列表" b="图层管理" />
              <div className="h-[30px] bg-[#efefef] border-b border-[#d0d2d5] flex items-center pl-[4px] gap-[14px] text-[#444]">
                <span>显示指定图层</span>
                <span>隐藏指定图层</span>
              </div>
              <div className="h-[21px] bg-[#efefef] flex text-[#444]">
                <div className="w-[51px] border-r border-[#d8d9db] flex items-center justify-center">开 / 关</div>
                <div className="w-[36px] border-r border-[#d8d9db] flex items-center justify-center">颜色</div>
                <div className="w-[151px] border-r border-[#d8d9db] flex items-center justify-center">名称</div>
              </div>
              {['已提取的 CAD 图层', 'CAD 原始图层'].map((t) => (
                <div key={t} className="h-[21px] w-[238px] flex border-b border-[#d8d9db] text-[#333]">
                  <div className="w-[51px] border-r border-[#d8d9db] flex items-center justify-center">
                    <span className="w-[14px] h-[14px] rounded-[2px] border border-[#888]" />
                  </div>
                  <div className="w-[36px] border-r border-[#d8d9db] flex items-center justify-center">
                    <svg width="6" height="9" viewBox="0 0 6 9" fill="none" stroke="#888"><path d="M.5.5l5 4-5 4z" /></svg>
                  </div>
                  <div className="flex-1 border-r border-[#d8d9db] flex items-center pl-[4px] whitespace-nowrap">{t}</div>
                </div>
              ))}
            </div>
          </div>
          <div className="w-[4px] flex flex-col">
            <div className="h-[257px]" />
            <div className="h-[100px] bg-[#6b7078]" />
          </div>
        </div>

        <div className="flex-1 min-w-0 flex flex-col">
          <Canvas />
          <div className="h-[4px] bg-white flex justify-center">
            <div className="w-[100px] bg-[#7a7f86]" />
          </div>
          <div className="flex-1 flex flex-col">
            <PanelCloseWide />
            <div className="h-[22px] bg-[#efefef] border-b border-[#c9cbd2] flex items-center pl-[8px] text-[#555] font-medium">梁平法表格</div>
            <div className="h-[30px] bg-[#efefef] flex items-center pl-[5px] gap-[14px] text-[#b2b2b2]">
              <span>复制跨数据</span>
              <span>粘贴跨数据</span>
              <span>输入当前列数据</span>
              <span>删除当前列数据</span>
              <span className="text-[#333]">页面设置</span>
              <span>调换起始跨</span>
              <span className="text-[#333]">悬臂钢筋代号</span>
            </div>
            <BeamTable />
            <div className="flex-1 bg-white border-b border-[#cfd0d2] flex flex-col justify-end">
              <div className="h-[11px] mb-[2px] flex items-center">
                <span className="ml-[3px] w-0 h-0 border-y-[4px] border-y-transparent border-r-[4px] border-r-[#333]" />
                <div className="ml-[4px] w-[735px] h-[8px] rounded-full bg-[#cbcbcb]" />
                <span className="ml-auto mr-[3px] w-0 h-0 border-y-[4px] border-y-transparent border-l-[4px] border-l-[#333]" />
              </div>
            </div>
          </div>
        </div>
      </div>

      {/* status bar */}
      <div className="h-[30px] bg-[#dddee0] flex items-center text-[#333] whitespace-nowrap pl-[2px]">
        <span className="w-[206px] shrink-0 pt-[2px] tracking-[0.5px]">X = 41457 Y = -148352 Z = 14950</span>
        <span className="w-[80px] shrink-0 pt-[2px]">层高 : 3.5</span>
        <span className="w-[133px] shrink-0 pt-[2px] tracking-[0.3px]">标高 : 14.95~18.45</span>
        <span className="w-[103px] shrink-0 pt-[2px]">0</span>
        <span className="w-[41px] shrink-0 pt-[2px]">隐藏:</span>
        <span className="w-[40px] shrink-0 pt-[2px]">78</span>
        <div className="flex gap-[3px] pt-[2px]">
          <StatusBtn w="w-[24px]">
            <svg width="14" height="14" viewBox="0 0 14 14" fill="none" stroke="#444"><path d="M2 1v11h11M2 9h4v3" /></svg>
          </StatusBtn>
          <StatusBtn w="w-[36px]" on>
            <svg width="15" height="18" viewBox="0 0 15 18" fill="none"><rect x="2.500" y="2.500" width="11" height="15" stroke={B} /><rect x="0" y="0" width="5" height="5" fill={O} /></svg>
            <Caret />
          </StatusBtn>
          <StatusBtn w="w-[24px]">
            <svg width="14" height="18" viewBox="0 0 14 18" stroke="#a8a8a8"><path d="M1 1l12 16M13 1L1 17" /></svg>
          </StatusBtn>
          <StatusBtn w="w-[36px]">
            <svg width="15" height="14" viewBox="0 0 15 14" fill="none" stroke="#444"><path d="M1 12h13M2 12L11 3M7 5v3" /></svg>
            <Caret />
          </StatusBtn>
          <StatusBtn w="w-[36px]">
            <svg width="15" height="14" viewBox="0 0 15 14" fill="none"><path d="M4 1v6M1 4h6" stroke="#444" /><rect x="6" y="8" width="8" height="4" fill="#333" /></svg>
            <Caret />
          </StatusBtn>
        </div>
        <div className="flex gap-[3px] ml-[6px] pt-[2px] text-[#444]">
          <StatusBtn w="w-[71px]">跨图层选择</StatusBtn>
          <StatusBtn w="w-[61px]">折线选择</StatusBtn>
        </div>
        <span className="ml-[3px] pt-[2px]">按鼠标左键指定第一个角点，或拾取构件图元</span>
        <span className="ml-auto pr-[37px] pt-[2px]">200 FPS</span>
      </div>

      {/* taskbar strip */}
      <div className="flex-1 bg-[#000208] flex overflow-hidden">
        <div className="w-[48px]" />
        <div className="w-[344px] bg-[#eeeeee]" />
        <div className="w-[346px]" />
        <div className="w-[47px] bg-[#33363a]" />
        <div className="ml-auto pr-[73px] text-[12px] leading-[12px] text-white pt-[6px]">10:19</div>
      </div>

      <NetWidget />
    </div>
  );
}

function PanelCloseWide() {
  return (
    <div className="h-[12px] bg-[#d4d6d9] border-b border-[#c9cbd2] flex items-center justify-end pr-[6px] text-[10px] leading-none text-[#777] font-bold">×</div>
  );
}
